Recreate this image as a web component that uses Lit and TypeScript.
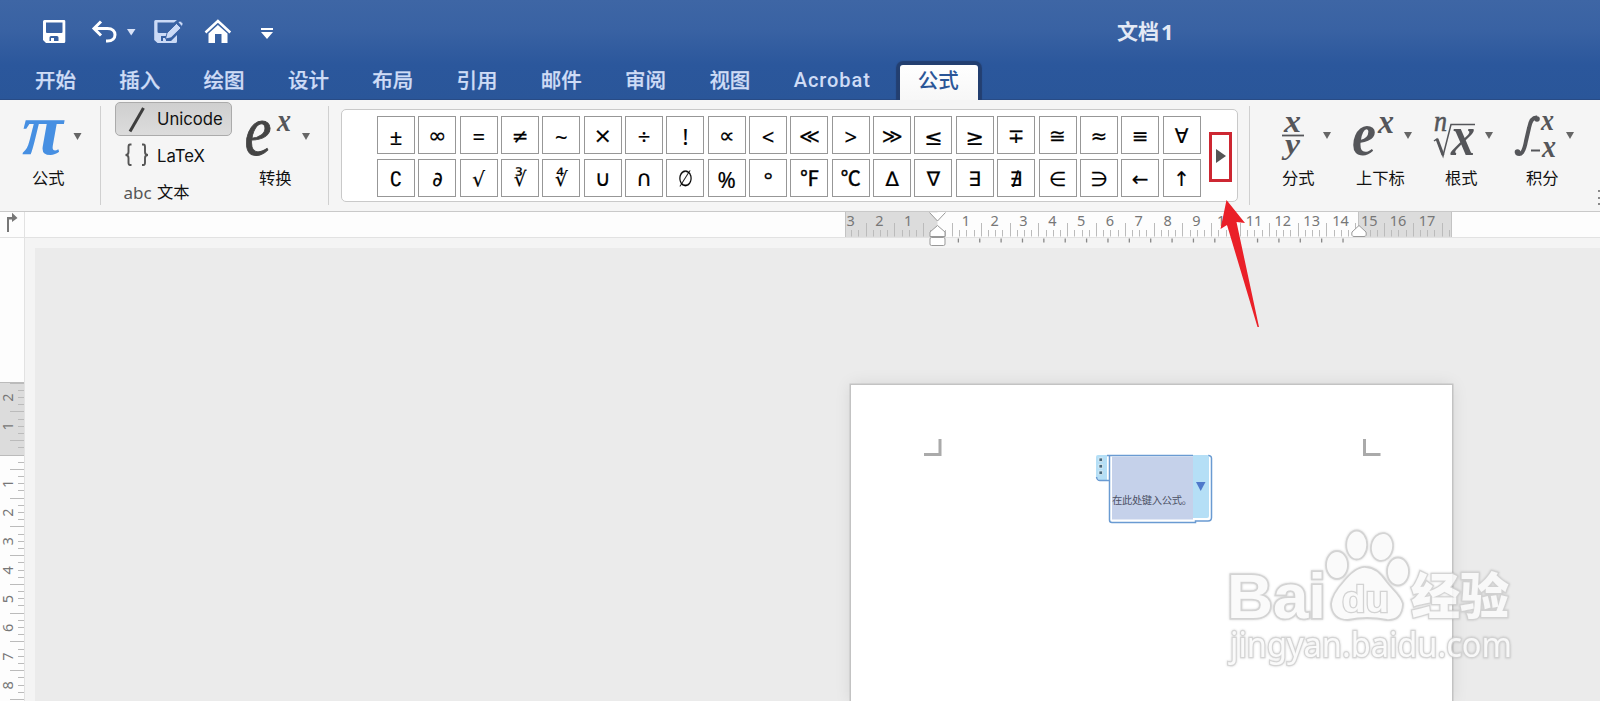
import { LitElement, html, css, svg } from "lit";
import { customElement } from "lit/decorators.js";

const TABS = ["开始", "插入", "绘图", "设计", "布局", "引用", "邮件", "审阅", "视图"];
const SYMBOLS = [..."±∞=≠~×÷!∝<≪>≫≤≥∓≅≈≡∀", ..."∁∂√∛∜∪∩∅%°℉℃∆∇∃∄∈∋←↑"];

@customElement("quick-bar")
class QuickBar extends LitElement {
  static styles = css`
    :host { display: grid; grid-template-columns: 1100px 1fr; height: 64px; }
    svg { display: block; }
    .title { padding: 17px 0 0 17px; font: 600 21px/30px Inter, "Noto Sans CJK SC", sans-serif; color: #e3e9f5; white-space: nowrap; display: flex; gap: 2px; }
    .title b { font: 700 22px/29px "Open Sans", sans-serif; }
  `;
  render() {
    return html`
      <svg width="300" height="64" fill="none">
        <path fill="#fff" fill-rule="evenodd" d="M44.5 20H64q1.300 0 1.300 1.300V41.500q0 1.500-1.500 1.500H46L43 40V21.500Q43 20 44.500 20ZM46 22.500V32q0 1 1 1H61.500q1 0 1-1V22.500ZM49.500 41H51V38H54V41H58.500V37.500Q58.500 36 57 36H51Q49.500 36 49.500 37.500Z"/>
        <path stroke="#fff" stroke-width="3" d="M101 21.500L94 28.500L101 35.500M94.500 28.500H107.500C117.500 28.500 117.500 41 107.500 41H106"/>
        <path fill="#d9e3f8" d="M127 29H135.500L131.200 35.500Z"/>
        <path fill="#cbdaf6" fill-rule="evenodd" d="M155.500 20H177L174 22.500H157.500V31.500Q157.500 33 159 33H168L166 36H161V41H163V38H166V41H171L177 35V41.500Q177 43 175.500 43H157.500L154.200 40V21.500Q154.200 20 155.500 20Z"/>
        <path fill="#cbdaf6" stroke="#315b9f" stroke-width=".8" d="M167 33L176.500 23.500L181 28L171 37.800L165.500 39ZM178 22.300L179.500 21.300Q180.300 20.800 181 21.500L182.800 23.300Q183.400 24 182.700 24.800L181.800 26.500Z"/>
        <path stroke="#fff" stroke-width="2.500" d="M205.500 32.500L217.900 21L230.300 32.500"/>
        <path fill="#fff" d="M208.500 33.500L217.900 25L227.500 33.500V43H221.500V34H215V43H208.500Z"/>
        <path fill="#fff" d="M261 28H273V30H261ZM261 32H273L267 39Z"/>
      </svg>
      <div class="title">文档<b>1</b></div>`;
  }
}

@customElement("tab-bar")
class TabBar extends LitElement {
  static styles = css`
    :host { display: flex; height: 36px; padding-left: 35px; box-sizing: border-box; font: 500 20.500px/34px Inter, "Noto Sans CJK SC", sans-serif; color: #cfdcf6; white-space: nowrap; }
    .tab { width: 84.300px; -webkit-text-stroke: .25px #cfdcf6; }
    .acrobat { width: 106px; font: 500 20px/33px Roboto, sans-serif; letter-spacing: .95px; }
    .active { width: 78px; height: 35px; margin-top: 1px; border-radius: 3px 3px 0 0; background: linear-gradient(#fff, #f7f7f7); color: #2b5697; text-align: center; line-height: 31px; text-indent: -1px; box-shadow: 0 0 1px 4px #233f70; clip-path: inset(-5px -5px 0 -5px); }
  `;
  render() {
    return html`${TABS.map((t) => html`<div class="tab">${t}</div>`)}
      <div class="acrobat">Acrobat</div><div class="active">公式</div>`;
  }
}

const caret = svg`<path fill="#666" d="M0 0H8L4 7Z"/>`;

@customElement("ribbon-bar")
class RibbonBar extends LitElement {
  static styles = css`
    :host { display: flex; height: 112px; box-sizing: border-box; border-bottom: 1px solid #c9c9c9; background: #f5f5f5; font: 16.300px/24px Inter, "Noto Sans CJK SC", sans-serif; color: #111; white-space: nowrap; overflow: hidden; }
    svg { display: block; overflow: visible; flex: none; }
    text { font-family: "Liberation Serif", serif; font-style: italic; fill: #55565a; }
    .group { box-sizing: border-box; display: flex; flex: none; }
    .sep { flex: none; width: 1px; height: 99px; margin-top: 6px; background: #d0d0d0; }
    .tool { flex: none; padding-top: 4px; }
    .label { margin-top: 1px; }
    .pi { width: 100px; }
    .pi .label { padding-left: 32px; }
    .pi text { fill: #468fe2; }
    .modes { flex: none; width: 117px; margin: 2px 10px 0 14px; }
    .mode { display: grid; grid-template-columns: 41px 1fr; align-items: center; height: 34px; margin-bottom: 2.500px; box-sizing: border-box; border: 1px solid transparent; font-size: 16.700px; }
    .mode.on { border: 1.500px solid #ababab; border-radius: 5px; background: linear-gradient(#cfcfcf, #dcdcdc); }
    .abc { padding-left: 7.500px; font: 17px "Noto Sans", sans-serif; color: #555; }
    .cn { font-size: 16.300px; }
    .convert { width: 86px; }
    .convert .label { padding-left: 17px; }
    .gallery { flex: none; display: flex; width: 897px; height: 93px; margin: 9px 11px 0 12px; border: 1.500px solid #c9c9c9; border-radius: 5px; background: #fff; box-sizing: border-box; padding: 6px 0 0 35px; }
    .cells { display: grid; grid-template-columns: repeat(20, 38px); grid-auto-rows: 38px; gap: 5px 3.350px; }
    .cell { display: flex; align-items: center; justify-content: center; box-sizing: border-box; border: 1px solid #979797; padding-top: 2px; font: 22px/24px "Noto Sans", "DejaVu Sans", sans-serif; color: #000; }
    .cell span { -webkit-text-stroke: .2px #000; }
    .math { font-family: "DejaVu Sans", sans-serif; font-size: 20px; }
    .serif { font-family: "Noto Sans CJK SC", "DejaVu Serif", serif; font-size: 20px; padding-top: 0; }
    .serif span { -webkit-text-stroke: .5px #000; }
    .big { font-size: 22px; }
    .narrow span { transform: scaleX(.78); }
    .more { margin: 16px 0 0 8px; width: 23px; height: 50px; box-sizing: border-box; border: 3px solid #cd2732; display: flex; align-items: center; justify-content: center; padding: 0 0 3px 2px; }
    .structs { padding-left: 20px; }
    .struct { width: 81px; }
    .clip { margin: 90px 0 0 4px; }
  `;
  cellClass(s: string) {
    if ("℉℃".includes(s)) return "cell serif";
    if (s === "∅") return "cell math big narrow";
    if ("∞∪∩×∝".includes(s)) return "cell math big";
    return "≠∁∂√∛∜∆∇∃∄∈∋≪≫∓≅≈≡∀←↑".includes(s) ? "cell math" : "cell";
  }
  render() {
    const struct = (label: string, art: unknown, pad: number) => html`
      <div class="tool struct"><svg width="81" height="61">${art}<g transform="translate(53 28)">${caret}</g></svg>
        <div class="label" style="padding-left:${pad}px">${label}</div></div>`;
    return html`
      <div class="group pi"><div class="tool">
        <svg width="100" height="61"><text x="22" y="50" font-size="74" font-weight="700" textLength="41" lengthAdjust="spacingAndGlyphs">π</text><g transform="translate(73.500 29)">${caret}</g></svg>
        <div class="label">公式</div></div></div>
      <div class="sep"></div>
      <div class="modes">
        <div class="mode on"><svg width="40" height="31"><path d="M14 27.500L27.500 4" stroke="#3d3d3d" stroke-width="3"/></svg><span>Unicode</span></div>
        <div class="mode"><svg width="40" height="31" fill="none" stroke="#555" stroke-width="1.900"><path d="M15.500 4.500H14Q12.500 4.500 12.500 7V12Q12.500 15 9.500 15Q12.500 15 12.500 18V22.500Q12.500 25 14 25H15.500M26 4.500H27.500Q29 4.500 29 7V12Q29 15 32 15Q29 15 29 18V22.500Q29 25 27.500 25H26"/></svg><span>LaTeX</span></div>
        <div class="mode"><span class="abc">abc</span><span class="cn">文本</span></div>
      </div>
      <div class="group convert"><div class="tool">
        <svg width="80" height="61"><text x="2.500" y="51" font-size="72" textLength="27" lengthAdjust="spacingAndGlyphs" style="fill:#444;stroke:#444;stroke-width:.9">e</text><text x="35" y="27" font-size="32" font-weight="700" textLength="14" lengthAdjust="spacingAndGlyphs">x</text><g transform="translate(60 29)">${caret}</g></svg>
        <div class="label">转换</div></div></div>
      <div class="sep"></div>
      <div class="gallery">
        <div class="cells">${SYMBOLS.map((s) => html`<div class=${this.cellClass(s)}><span>${s}</span></div>`)}</div>
        <div class="more"><svg width="10" height="14"><path fill="#555" d="M0 0L10 7L0 14Z"/></svg></div>
      </div>
      <div class="sep"></div>
      <div class="group structs">
        ${struct("分式", svg`<text x="14" y="27.500" font-size="32" font-weight="700" textLength="17" lengthAdjust="spacingAndGlyphs">x</text><path d="M12 31.500H34" stroke="#55565a" stroke-width="1.800"/><text x="15" y="49.500" font-size="30" font-weight="700" textLength="15" lengthAdjust="spacingAndGlyphs">y</text>`, 12)}
        ${struct("上下标", svg`<text x="1" y="51" font-size="62" font-weight="700" textLength="24" lengthAdjust="spacingAndGlyphs">e</text><text x="27" y="29" font-size="34" font-weight="700" textLength="16" lengthAdjust="spacingAndGlyphs">x</text>`, 5)}
        ${struct("根式", svg`<text x="2" y="27" font-size="29" textLength="13" lengthAdjust="spacingAndGlyphs" style="stroke:#55565a;stroke-width:.6">n</text><path fill="none" stroke="#55565a" stroke-width="1.500" d="M2 37L5 35L11 52L19 20.500H43"/><path d="M5 35L11 51" stroke="#55565a" stroke-width="3"/><text x="19" y="51" font-size="58" font-weight="700" textLength="24" lengthAdjust="spacingAndGlyphs">x</text>`, 13)}
        ${struct("积分", svg`<path fill="none" stroke="#55565a" stroke-width="4" d="M3.500 49C8 52 11 48 13 37L16 24Q18 13 24 13.500"/><circle cx="4.500" cy="48" r="2.800" fill="#55565a"/><circle cx="24" cy="15" r="2.800" fill="#55565a"/><text x="28" y="26" font-size="30" font-weight="700" textLength="13" lengthAdjust="spacingAndGlyphs">x</text><path d="M18 46.500H27" stroke="#55565a" stroke-width="2"/><text x="29" y="53" font-size="32" font-weight="700" textLength="14" lengthAdjust="spacingAndGlyphs">x</text>`, 13)}
      </div>
      <svg class="clip" width="2" height="16"><path d="M0 1H2M0 8H2M0 14H2" stroke="#666" stroke-width="1.500"/></svg>`;
  }
}

@customElement("top-ruler")
class TopRuler extends LitElement {
  static styles = css`
    :host, svg { display: block; }
    text { font: 14.500px "Noto Sans", sans-serif; fill: #777; text-anchor: middle; }
  `;
  render() {
    const ticks = [];
    for (let i = -12; i <= 71; i++) {
      const x = 937.500 + i * 7.200;
      if (i === 0) continue;
      ticks.push(svg`<path stroke="#bbb" d="M${Math.round(x) + 0.500} ${i % 4 === 2 || i % 4 === -2 ? 11 : 18}V24.500"/>`);
    }
    const nums = [];
    for (let n = -3; n <= 17; n++) if (n) nums.push(svg`<text x=${937 + n * 28.820} y="14">${Math.abs(n)}</text>`);
    const tabs = [];
    for (let i = 1; i <= 19; i++) tabs.push(svg`<path stroke="#888" stroke-width="1.300" d="M${937 + i * 21.370} 26.500V30.500"/>`);
    return html`<svg width="1600" height="36">
      <rect width="1600" height="25" fill="#fdfdfd"/><rect x="25" y="25" width="1575" height="11" fill="#f4f4f4"/><rect y="26" width="24" height="10" fill="#fdfdfd"/>
      <path d="M0 25.500H1600M24.500 0V36" stroke="#e2e2e2"/>
      <path d="M845 0H937.500V25H845ZM1359 0H1452V25H1359Z" fill="#dcdcdc"/>
      <path d="M845.500 0V25M1451.500 0V25M1358.500 0V25" stroke="#c3c3c3"/>
      ${ticks}${nums}${tabs}
      <path fill="#777" d="M7 5H12V0.800L17.500 6L12 10V7.500H9V20H7Z"/>
      <g fill="#fff" stroke="#999"><path d="M929.500 .5L937.500 9L945.500 .5"/><path d="M937.500 13.500L945 20V24.500H930V20Z"/><rect x="930" y="25.500" width="15" height="8" rx="1.500"/><path d="M1359 13.500L1366 20Q1367 24.500 1364 24.500H1354Q1351 24.500 1352 20Z"/></g>
    </svg>`;
  }
}

@customElement("side-ruler")
class SideRuler extends LitElement {
  static styles = css`
    :host, svg { display: block; }
    text { font: 14.500px "Noto Sans", sans-serif; fill: #777; text-anchor: middle; }
  `;
  render() {
    const zero = 207.500;
    const ticks = [];
    for (let i = -10; i <= 34; i++) {
      if (!i) continue;
      ticks.push(svg`<path stroke="#bbb" d="M${i % 4 === 2 || i % 4 === -2 ? 10 : 18} ${Math.round(zero + i * 7.190) - 0.500}H24"/>`);
    }
    const nums = [];
    for (let n = -2; n <= 8; n++) if (n) nums.push(svg`<text transform="translate(13 ${zero - 0.300 + n * 28.760}) rotate(-90)">${Math.abs(n)}</text>`);
    return html`<svg width="35" height="453"><rect width="35" height="453" fill="#f4f4f4"/><rect width="24" height="453" fill="#fdfdfd"/>
      <rect y="134" width="24" height="73" fill="#dcdcdc"/><path d="M0 134.500H24M0 207.500H24" stroke="#bbb"/><path d="M24.500 0V453" stroke="#e2e2e2"/>${ticks}${nums}</svg>`;
  }
}

@customElement("document-page")
class DocumentPage extends LitElement {
  static styles = css`
    :host { display: block; background: #fff; box-shadow: 0 0 0 1.500px #c3c3c3, 0 0 16px rgba(0, 0, 0, .1); }
    svg { display: block; }
    text { font: 10.300px "Noto Sans CJK SC", sans-serif; fill: #4d5266; }
  `;
  render() {
    return html`<svg width="601" height="317" viewBox="851 385 601 317">
      <path fill="none" stroke="#aaa" stroke-width="3" d="M940 439V454.500H924M1364.500 439V454.500H1380.500"/>
      <path d="M1096 457Q1096 455 1098 455H1107V481H1100L1096 477Z" fill="#b5dff6"/>
      <path fill="none" stroke="#6a9bd2" stroke-width="1.500" d="M1096.500 477Q1097 480.500 1100 480.500H1109M1107 455.500H1193M1109.500 456V520Q1109.500 522.500 1112 522.500H1195.500V521H1208Q1211.500 521 1211.500 517.500V458.500Q1211.500 455.500 1208 455.500"/>
      <rect x="1112" y="456.500" width="81" height="63" fill="#c5d1ea"/>
      <path d="M1193 455H1207Q1209 455 1209 457V516Q1209 518 1207 518H1193Z" fill="#b5dff6"/>
      <path d="M1196 482H1205.500L1200.700 491Z" fill="#4f79cb"/>
      <g fill="#47677c" stroke="#e9f7fc" stroke-width=".7"><rect x="1099" y="458" width="3.500" height="3.500"/><rect x="1099" y="464.500" width="3.500" height="3.500"/><rect x="1099" y="471" width="3.500" height="3.500"/></g>
      <text x="1112" y="504" textLength="80">在此处键入公式。</text>
    </svg>`;
  }
}

@customElement("site-watermark")
class SiteWatermark extends LitElement {
  static styles = css`
    :host, svg { display: block; }
    svg { filter: drop-shadow(0 0 1px rgba(0, 0, 0, .18)); }
    .mark { fill: #fff; stroke: #d2d2d2; stroke-width: 1.800; opacity: .85; }
    text { paint-order: stroke; }
    .latin { font: 700 63px "Liberation Sans", sans-serif; stroke-width: 3.500; }
    .du { font: 700 37px "Liberation Sans", sans-serif; stroke-width: 2.500; }
    .cn { font: 900 49px "Noto Sans CJK SC", sans-serif; stroke-width: 2.500; }
    .url { font: 34px "Noto Sans", sans-serif; stroke-width: 2.500; }
  `;
  render() {
    return html`<svg width="300" height="150" viewBox="1220 525 300 150"><g class="mark">
      <text class="latin" x="1227" y="618" textLength="99" lengthAdjust="spacingAndGlyphs">Bai</text>
      <ellipse cx="1337" cy="565" rx="11" ry="14"/><ellipse cx="1356.700" cy="545" rx="10.500" ry="14.500"/><ellipse cx="1382" cy="547" rx="11" ry="14" transform="rotate(10 1382 547)"/><ellipse cx="1398" cy="571.500" rx="11" ry="14"/>
      <path d="M1343 582Q1356 566 1366 567Q1377 567 1387 582C1392 589 1401 595 1403 604Q1402 621 1387 620Q1367 616 1348 620Q1332 620 1331 604Q1332 594 1343 582Z"/>
      <text class="du" x="1342" y="612" textLength="47" lengthAdjust="spacingAndGlyphs">du</text>
      <text class="cn" x="1411" y="614" textLength="98">经验</text>
      <text class="url" x="1230" y="657" textLength="282" lengthAdjust="spacingAndGlyphs">jingyan.baidu.com</text>
    </g></svg>`;
  }
}

@customElement("app-root")
class AppRoot extends LitElement {
  static styles = css`
    :host { display: block; position: relative; width: 1600px; height: 701px; overflow: hidden; background: #ebebeb; }
    .head { height: 100px; background: linear-gradient(#3e66a5 0, #3962a3 30%, #2b579c 65%, #2a5699); box-shadow: inset 0 -1px #284b85; }
    .work { display: grid; grid-template-columns: 35px 1fr; height: 453px; }
    .canvas { position: relative; overflow: hidden; }
    .page { position: absolute; left: 816px; top: 137px; }
    .watermark { position: absolute; left: 1185px; top: 277px; }
    .pointer { position: absolute; left: 1215px; top: 198px; }
  `;
  render() {
    return html`
      <div class="head"><quick-bar></quick-bar><tab-bar></tab-bar></div>
      <ribbon-bar></ribbon-bar>
      <top-ruler></top-ruler>
      <div class="work"><side-ruler></side-ruler>
        <div class="canvas"><document-page class="page"></document-page><site-watermark class="watermark"></site-watermark></div>
      </div>
      <svg class="pointer" width="50" height="132"><path fill="#ea2028" d="M11.500 2L30 25L21.500 24L44 129L42.500 129L12 27L5.500 31Z"/></svg>`;
  }
}
